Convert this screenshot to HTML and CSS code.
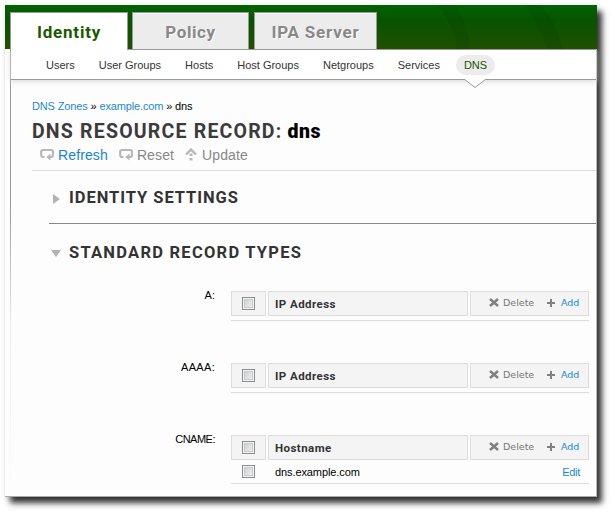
FILE: index.html
```html
<!DOCTYPE html>
<html lang="en">
<head>
<meta charset="utf-8">
<title>DNS Resource Record</title>
<link rel="stylesheet" href="styles.css">
</head>
<body>
<svg class="defs" width="0" height="0">
  <symbol id="loop" viewBox="0 0 15 13"><path d="M4.5 9H3Q1.2 9 1.2 7V4Q1.2 2 3 2H11Q13 2 13 4V7Q13 9 11 9H9" fill="none" stroke="#b8b8b8" stroke-width="2.2"/><path d="M10.5 5.5V12.5L6.3 9Z" fill="#b8b8b8"/></symbol>
  <symbol id="up" viewBox="0 0 12 13"><path d="M1 6.5L6 1.6L11 6.5" fill="none" stroke="#b8b8b8" stroke-width="2.4"/><path d="M4.5 5.5H7.5V8H4.5ZM4.5 10H7.5V12.6H4.5Z" fill="#b8b8b8"/></symbol>
  <symbol id="cross" viewBox="0 0 10 9"><path d="M1 1L9 8M9 1L1 8" stroke="#7d8182" stroke-width="2.5"/></symbol>
  <symbol id="plus" viewBox="0 0 8 8"><path d="M4 0V8M0 4H8" stroke="#7d8182" stroke-width="2"/></symbol>
</svg>
<div class="window">
  <header class="banner">
    <svg class="streaks" width="220" height="44"><path d="M80 44Q75 15 60 0H78Q92 20 93 44ZM170 44Q160 15 148 0H164Q176 12 186 44Z"/></svg>
    <nav class="tabs">
      <a class="tab active"><span class="t-identity">Identity</span></a>
      <a class="tab policy"><span class="t-policy">Policy</span></a>
      <a class="tab server"><span class="t-server">IPA Server</span></a>
    </nav>
  </header>
  <div class="panel">
    <nav class="subnav">
      <a>Users</a><a>User Groups</a><a>Hosts</a><a>Host Groups</a><a>Netgroups</a><a>Services</a><a class="current">DNS<svg class="notch" width="24" height="10"><path d="M0 0H1L12 8.5L23 0H24" fill="#fff" stroke="#999"/></svg></a>
    </nav>
    <main>
      <div class="crumbs"><a>DNS Zones</a> » <a>example.com</a> » dns</div>
      <h1>DNS RESOURCE RECORD: <b>dns</b></h1>
      <div class="actions">
        <a class="on"><svg width="15" height="13"><use href="#loop"/></svg>Refresh</a>
        <a><svg width="15" height="13"><use href="#loop"/></svg>Reset</a>
        <a class="update"><svg width="12" height="13"><use href="#up"/></svg>Update</a>
      </div>
      <h2 class="closed"><i></i><span class="h-id">IDENTITY SETTINGS</span></h2>
      <h2 class="open"><i></i><span class="h-std">STANDARD RECORD TYPES</span></h2>
      <section class="record"><label>A:</label>
        <div class="table"><div class="row head"><div class="cell"><i class="check"></i></div><div class="cell name">IP Address</div><div class="cell tools"><svg width="10" height="9"><use href="#cross"/></svg><span>Delete</span><svg class="plus" width="8" height="8"><use href="#plus"/></svg><a>Add</a></div></div></div>
      </section>
      <section class="record"><label class="aaaa">AAAA:</label>
        <div class="table"><div class="row head"><div class="cell"><i class="check"></i></div><div class="cell name">IP Address</div><div class="cell tools"><svg width="10" height="9"><use href="#cross"/></svg><span>Delete</span><svg class="plus" width="8" height="8"><use href="#plus"/></svg><a>Add</a></div></div></div>
      </section>
      <section class="record"><label class="cname">CNAME:</label>
        <div class="table"><div class="row head"><div class="cell"><i class="check"></i></div><div class="cell name">Hostname</div><div class="cell tools"><svg width="10" height="9"><use href="#cross"/></svg><span>Delete</span><svg class="plus" width="8" height="8"><use href="#plus"/></svg><a>Add</a></div></div>
        <div class="row body"><div><i class="check"></i></div><div class="value">dns.example.com</div><a class="edit">Edit</a></div></div>
      </section>
    </main>
  </div>
</div>
</body>
</html>
```
FILE: styles.css
```css
* { box-sizing: border-box; }
body { margin: 0; padding: 5px; width: 612px; height: 513px; overflow: hidden; background: #fff; font: 11px/14px "Liberation Sans", sans-serif; color: #000; }
.defs { position: absolute; }
a { color: #1e88d2; }
.window { width: 592px; height: 492px; background: #fdfdfd; border-bottom: 1px solid #aaa; border-right: 1px solid #bbb; box-shadow: 5px 6px 6px 0 #333, 0 0 5px #eee; }
.banner { position: relative; width: 592px; height: 44px; background: linear-gradient(#006400, #085300 35%, #205000); padding: 7px 0 0 5px; }
.streaks { position: absolute; right: 0; top: 0; fill: rgba(0,40,0,.1); }
.tabs { position: relative; display: flex; }
.tab { height: 37px; border: 1px solid #999; border-bottom: 0; background: #ececec; display: flex; justify-content: center; font: bold 17px/39px Roboto, sans-serif; color: #888; text-shadow: 1px 1px #fff; box-shadow: inset 0 1px #fff; white-space: nowrap; }
.active { width: 118px; height: 38px; margin-right: 4px; background: #fff; color: #1c5a00; }
.policy { width: 117px; margin-right: 5px; }
.server { width: 123px; }
.t-identity { letter-spacing: .8px; }
.t-policy { letter-spacing: .6px; }
.t-server { letter-spacing: .8px; }
.panel { margin-left: 5px; height: 447px; border-left: 1px solid; border-image: linear-gradient(#999, #999 35%, #eee 62%, #fdfdfd) 1; }
.subnav { height: 31px; border-top: 1px solid #999; border-bottom: 1px solid #999; background: #fff; display: flex; gap: 8px; padding: 5px 0 0 27px; box-shadow: 0 2px 5px #ddd; }
.subnav a { position: relative; height: 20px; padding: 0 8px; line-height: 21px; color: #333; white-space: nowrap; }
.subnav .current { background: #ececec; border-radius: 10px; color: #205000; }
.notch { position: absolute; left: 7px; top: 24px; }
main { padding: 19px 0 0 21px; }
.crumbs { height: 15px; line-height: 15px; letter-spacing: -.14px; }
h1 { margin: 7px 0 0; height: 20px; font: bold 19.5px/22px Roboto, sans-serif; letter-spacing: 1.2px; color: #3b3b3b; white-space: nowrap; }
h1 b { color: #000; letter-spacing: .5px; margin-left: -1px; }
.actions { width: 564px; height: 30px; border-bottom: 1px solid #ddd; display: flex; padding: 6px 0 0 8px; gap: 11px; font-size: 14px; line-height: 16px; letter-spacing: .12px; }
.actions a { display: flex; gap: 3px; color: #888; }
.actions svg { margin-top: 1px; }
.actions .on { color: #1583d8; }
.actions .update { gap: 5px; }
h2 { margin: 0 0 0 17px; width: 547px; display: flex; align-items: center; font: bold 16.5px/20px Roboto, sans-serif; color: #333; white-space: nowrap; }
.h-id { letter-spacing: .95px; }
.h-std { letter-spacing: 1.25px; }
h2 i { width: 0; height: 0; border: 5px solid transparent; }
.closed { height: 53px; border-bottom: 1px solid #888; padding-top: 2px; }
.closed i { margin: 2px 9px 0 4px; border-left: 7px solid #b3b3b3; border-right: 0; }
.open { height: 67px; padding-bottom: 10px; }
.open i { margin: 2px 8px 0 2px; border-top: 7px solid #b3b3b3; border-bottom: 0; }
.record { display: flex; height: 72px; }
.record label { width: 183px; margin-right: 16px; text-align: right; line-height: 9px; }
.record .aaaa { letter-spacing: .3px; }
.record .cname { letter-spacing: -.5px; }
.table { width: 358px; }
.row { display: grid; grid-template-columns: 35px 200px 119px; gap: 2px; }
.head { height: 30px; border-bottom: 1px solid #ddd; }
.head:not(:last-child) { height: 25px; border: 0; }
.cell { height: 25px; border: 1px solid #ddd; background: #f4f4f4; display: flex; align-items: center; }
.check { display: block; width: 13px; height: 13px; margin-left: 10px; border: 1px solid #8c8c8c; background: linear-gradient(135deg, #c4c9ce, #f7f7f7); box-shadow: inset 0 0 0 1px #f4f4f4, inset 0 0 0 2px #c8cacc; }
.name { padding-left: 6px; font: bold 11.5px/14px Roboto, sans-serif; letter-spacing: .45px; color: #333; }
.tools { padding: 0 8px 2px 18px; font: 9.5px/12px "DejaVu Sans", sans-serif; color: #777; }
.tools span { margin: 0 13px 0 4px; width: 31px; }
.tools a { margin-left: 6px; }
.plus { flex: none; }
.body { height: 24px; border-bottom: 1px solid #ddd; align-items: center; }
.body .check { margin-left: 11px; }
.value { padding-left: 7px; letter-spacing: -.1px; }
.edit { text-align: right; padding-right: 9px; letter-spacing: -.3px; }
```
